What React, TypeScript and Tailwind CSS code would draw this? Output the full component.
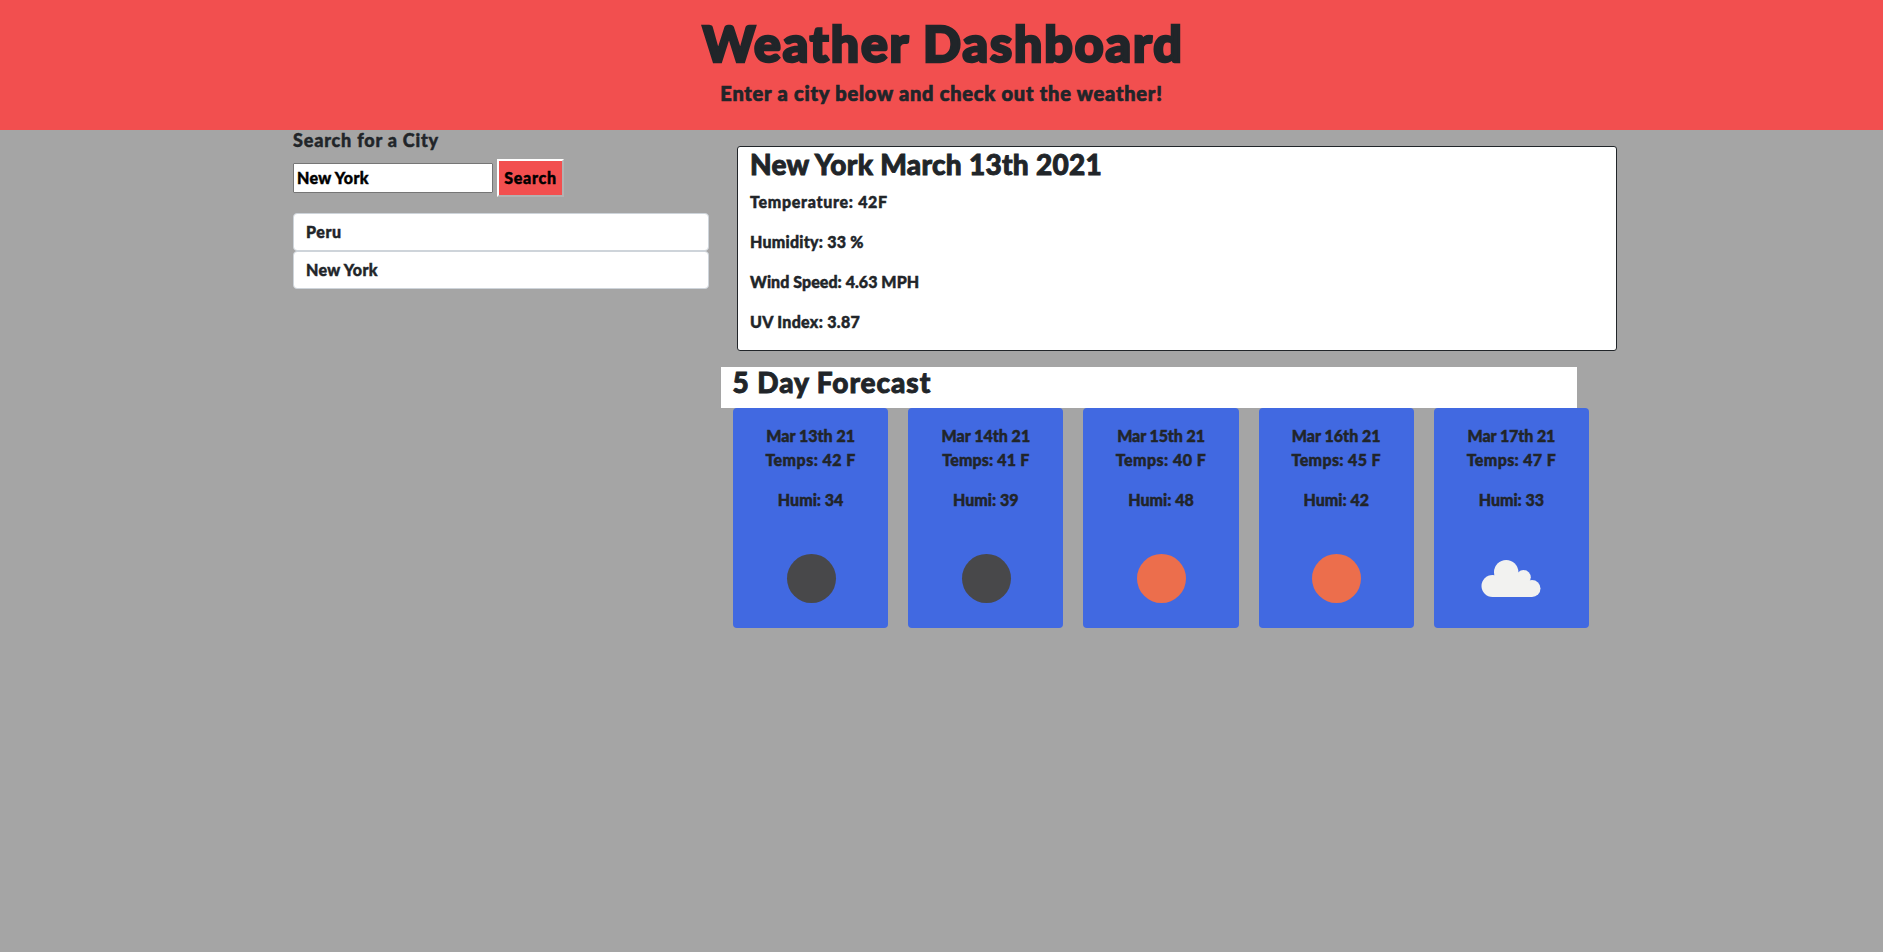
type Sky = "night" | "sun" | "cloud";

interface ForecastDay {
  date: string;
  dateSpacing: string;
  temp: number;
  tempSpacing: string;
  humidity: number;
  sky: Sky;
}

const days: ForecastDay[] = [
  { date: "Mar 13th 21", dateSpacing: "tracking-normal", temp: 42, tempSpacing: "tracking-[0.45px]", humidity: 34, sky: "night" },
  { date: "Mar 14th 21", dateSpacing: "tracking-normal", temp: 41, tempSpacing: "tracking-[0.15px]", humidity: 39, sky: "night" },
  { date: "Mar 15th 21", dateSpacing: "tracking-[-0.1px]", temp: 40, tempSpacing: "tracking-[0.45px]", humidity: 48, sky: "sun" },
  { date: "Mar 16th 21", dateSpacing: "tracking-normal", temp: 45, tempSpacing: "tracking-[0.35px]", humidity: 42, sky: "sun" },
  { date: "Mar 17th 21", dateSpacing: "tracking-[-0.1px]", temp: 47, tempSpacing: "tracking-[0.35px]", humidity: 33, sky: "cloud" },
];

const readings = [
  { text: "Temperature: 42F", spacing: "tracking-[0.7px]" },
  { text: "Humidity: 33 %", spacing: "tracking-[0.25px]" },
  { text: "Wind Speed: 4.63 MPH", spacing: "tracking-[0.05px]" },
  { text: "UV Index: 3.87", spacing: "tracking-[0.3px]" },
];

const history = [
  { city: "Peru", spacing: "tracking-[0.6px]" },
  { city: "New York", spacing: "tracking-[0.35px]" },
];

function SkyIcon({ sky }: { sky: Sky }) {
  return (
    <svg viewBox="0 0 100 100" className="h-[100px] w-[100px] shrink-0" aria-hidden="true">
      {sky === "cloud" ? (
        <g fill="#f2f2f0">
          <circle cx="31.5" cy="58" r="11" />
          <circle cx="45.2" cy="44.2" r="12.2" />
          <circle cx="62.5" cy="49.3" r="7.3" />
          <circle cx="71" cy="60.5" r="8.5" />
          <path d="M31.5 69V50L45 44l17 5 9 8v12z" />
        </g>
      ) : (
        <circle cx="50.5" cy="50.5" r="24.5" fill={sky === "sun" ? "#ec6e4c" : "#48484a"} />
      )}
    </svg>
  );
}

function DayCard({ day }: { day: ForecastDay }) {
  return (
    <article className="flex h-[220px] flex-1 flex-col items-center rounded bg-[#4169e1] pt-4">
      <h5 className={day.dateSpacing}>{day.date}</h5>
      <p className={`mb-4 ${day.tempSpacing}`}>Temps: {day.temp} F</p>
      <p className="mb-4">Humi: {day.humidity}</p>
      <SkyIcon sky={day.sky} />
    </article>
  );
}

export default function App() {
  return (
    <div className="min-h-screen bg-[#a5a5a5] font-['Lato',sans-serif] text-base leading-6 font-black whitespace-nowrap text-[#212529] [-webkit-text-stroke:0.45px] [stroke-linejoin:round]">
      <header className="flex h-[130px] flex-col items-center bg-[#f24f4f] pt-[13px]">
        <h1 className="pl-[3px] text-[50px] leading-[60px] tracking-[1.9px] [-webkit-text-stroke:2.6px]">Weather Dashboard</h1>
        <p className="mt-2 text-xl leading-6 tracking-[0.77px] [-webkit-text-stroke:0.7px]">
          Enter a city below and check out the weather!
        </p>
      </header>

      <main className="mx-auto flex w-[1321px] items-start pr-px">
        <aside className="w-[440px] px-3">
          <label htmlFor="city" className="block text-lg leading-5 tracking-[0.8px]">
            Search for a City
          </label>
          <div className="mt-[9px] flex items-center gap-1">
            <input
              id="city"
              type="text"
              defaultValue="New York"
              className="h-[30px] w-[200px] rounded-[1px] border border-[#767676] bg-white px-[3px] pb-px font-black tracking-[0.35px] text-black"
            />
            <button
              type="button"
              className="flex h-[38px] w-[67px] items-center justify-center border-2 border-t-white border-r-[#b2b2b2] border-b-[#b2b2b2] border-l-white bg-[#f24f4f] tracking-[0.7px] text-black"
            >
              Search
            </button>
          </div>
          <ul className="mt-4">
            {history.map((h) => (
              <li key={h.city} className={`rounded border border-[#ced4da] bg-white px-3 py-1.5 ${h.spacing}`}>
                {h.city}
              </li>
            ))}
          </ul>
        </aside>

        <div className="w-[880px]">
          <section className="mt-4 ml-4 h-[205px] w-[880px] rounded-[3px] border border-[#212529] bg-white pl-3">
            <h2 className="mb-[9px] text-[28px] leading-[34px] tracking-[0.3px] [-webkit-text-stroke:0.9px]">
              New York March 13th 2021
            </h2>
            {readings.map((r) => (
              <p key={r.text} className={`mb-4 ${r.spacing}`}>
                {r.text}
              </p>
            ))}
          </section>

          <h3 className="mt-4 h-[41px] w-[856px] bg-white pl-[11.5px] text-[28px] leading-[31px] tracking-[0.95px] [-webkit-text-stroke:0.9px]">
            5 Day Forecast
          </h3>

          <section className="ml-3 flex w-[856px] gap-5">
            {days.map((day) => (
              <DayCard key={day.date} day={day} />
            ))}
          </section>
        </div>
      </main>
    </div>
  );
}
